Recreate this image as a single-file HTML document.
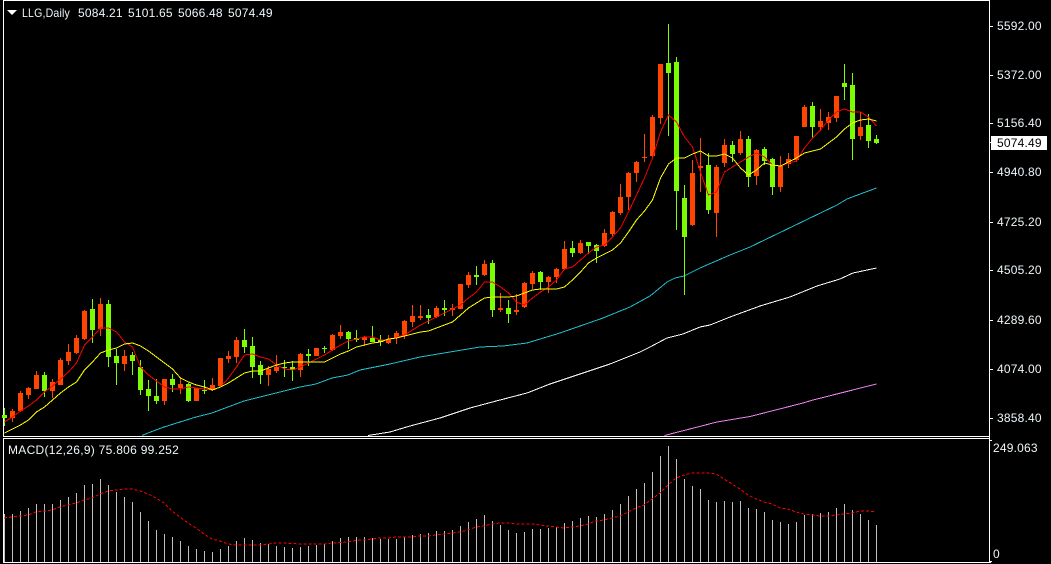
<!DOCTYPE html>
<html><head><meta charset="utf-8"><style>
html,body{margin:0;padding:0;background:#000;width:1051px;height:564px;overflow:hidden}
svg{display:block;position:absolute;left:0;top:0}
text{font-family:"Liberation Sans",sans-serif;font-size:12px;fill:#eef6fa;letter-spacing:.2px}
.l{fill:none;stroke-width:1;shape-rendering:crispEdges;stroke-linejoin:miter}
</style></head><body>
<svg width="1051" height="564" viewBox="0 0 1051 564" xmlns="http://www.w3.org/2000/svg">
<rect width="1051" height="564" fill="#000"/>
<!-- frame -->
<g fill="#fff" shape-rendering="crispEdges">
<rect x="3" y="0" width="987" height="1"/>
<rect x="3" y="0" width="1" height="437"/>
<rect x="3" y="436" width="987" height="1"/>
<rect x="3" y="438" width="987" height="1"/>
<rect x="3" y="438" width="1" height="125"/>
<rect x="3" y="562" width="988" height="1"/>
<rect x="989" y="0" width="1" height="563"/>
<rect x="990" y="26" width="3" height="1"/><rect x="990" y="75" width="3" height="1"/><rect x="990" y="123" width="3" height="1"/><rect x="990" y="172" width="3" height="1"/><rect x="990" y="222" width="3" height="1"/><rect x="990" y="270" width="3" height="1"/><rect x="990" y="320" width="3" height="1"/><rect x="990" y="369" width="3" height="1"/><rect x="990" y="418" width="3" height="1"/><rect x="990" y="142" width="3" height="1"/><rect x="990" y="440" width="2" height="1"/><rect x="990" y="561" width="2" height="1"/>
</g>
<!-- long MAs under candles -->
<path class="l" stroke="#ee82ee" d="M664.5 435.5L717 422L750 416.5L803 403L813 400L876.5 384"/>
<path class="l" stroke="#fff" d="M368 435.5L390 432L410 426L440 418L470 408L500 400L527 393L550 384L580 374L610 364L640 352L650 347L667 338L683 334L700 327L710 325L730 317L760 306L790 297L817 286L840 279L853 273L876.5 268"/>
<path class="l" stroke="#20bfd0" d="M142 435.5L148 433L164 427L180 422L196 417L212 413L228 407L244 401L260 397L276 393L300 387L316 384L332 378L348 375L360 370L390 364L420 357L450 352L480 347L503 346L527 343L560 333L603 318L630 307L650 296L667 282L675 278L684 276L700 268L730 255L750 247L837 205L847 199L863 193L876.5 188"/>
<!-- green candles -->
<path fill="#7cfc00" shape-rendering="crispEdges" d="M4 408h1V426h-1zM2 415h5V418h-5zM44 372h1V397h-1zM42 375h5V391h-5zM92 299h1V343h-1zM90 309h5V330h-5zM108 300h1V367h-1zM106 304h5V357h-5zM116 349h1V385h-1zM114 356h5V363h-5zM132 352h1V375h-1zM130 355h5V361h-5zM140 360h1V395h-1zM138 367h5V390h-5zM148 380h1V411h-1zM146 389h5V396h-5zM156 379h1V404h-1zM154 396h5V401h-5zM172 374h1V392h-1zM170 379h5V385h-5zM188 383h1V402h-1zM186 384h5V401h-5zM204 380h1V394h-1zM202 390h5V391h-5zM244 329h1V353h-1zM242 340h5V347h-5zM252 337h1V378h-1zM250 346h5V367h-5zM260 361h1V384h-1zM258 365h5V375h-5zM284 360h1V377h-1zM282 367h5V368h-5zM292 361h1V381h-1zM290 367h5V370h-5zM308 349h1V366h-1zM306 354h5V356h-5zM324 346h1V353h-1zM322 348h5V349h-5zM348 331h1V349h-1zM346 332h5V339h-5zM356 330h1V342h-1zM354 338h5V340h-5zM372 326h1V342h-1zM370 338h5V342h-5zM380 335h1V346h-1zM378 340h5V342h-5zM428 309h1V324h-1zM426 315h5V318h-5zM444 300h1V316h-1zM442 308h5V310h-5zM476 266h1V285h-1zM474 275h5V277h-5zM492 260h1V317h-1zM490 263h5V310h-5zM508 300h1V323h-1zM506 308h5V314h-5zM540 271h1V290h-1zM538 272h5V282h-5zM572 241h1V257h-1zM570 248h5V253h-5zM588 242h1V254h-1zM586 242h5V246h-5zM596 244h1V263h-1zM594 245h5V251h-5zM668 24h1V136h-1zM666 63h5V73h-5zM676 57h1V230h-1zM674 62h5V191h-5zM684 185h1V295h-1zM682 198h5V237h-5zM708 153h1V214h-1zM706 165h5V210h-5zM732 141h1V162h-1zM730 145h5V154h-5zM748 136h1V187h-1zM746 139h5V177h-5zM764 147h1V165h-1zM762 149h5V161h-5zM772 158h1V195h-1zM770 159h5V187h-5zM812 102h1V138h-1zM810 106h5V127h-5zM844 64h1V100h-1zM842 83h5V87h-5zM852 73h1V160h-1zM850 85h5V139h-5zM868 114h1V148h-1zM866 125h5V141h-5zM876 135h1V144h-1zM874 139h5V143h-5z"/>
<!-- red candles -->
<path fill="#ff4500" shape-rendering="crispEdges" d="M12 409h1V422h-1zM10 411h5V418h-5zM20 391h1V412h-1zM18 393h5V411h-5zM28 387h1V399h-1zM26 388h5V395h-5zM36 371h1V389h-1zM34 375h5V389h-5zM52 379h1V398h-1zM50 382h5V391h-5zM60 358h1V385h-1zM58 360h5V385h-5zM68 344h1V365h-1zM66 352h5V361h-5zM76 335h1V354h-1zM74 338h5V353h-5zM84 310h1V340h-1zM82 311h5V339h-5zM100 298h1V336h-1zM98 304h5V329h-5zM124 350h1V371h-1zM122 356h5V364h-5zM164 379h1V405h-1zM162 379h5V401h-5zM180 377h1V394h-1zM178 384h5V388h-5zM194 388h5V401h-5zM212 378h1V391h-1zM210 385h5V390h-5zM218 358h5V386h-5zM228 351h1V363h-1zM226 356h5V359h-5zM236 337h1V363h-1zM234 340h5V357h-5zM268 366h1V386h-1zM266 369h5V375h-5zM276 355h1V373h-1zM274 367h5V371h-5zM300 353h1V377h-1zM298 354h5V370h-5zM314 348h5V356h-5zM332 334h1V351h-1zM330 335h5V350h-5zM340 325h1V339h-1zM338 332h5V336h-5zM364 336h1V346h-1zM362 337h5V340h-5zM388 335h1V344h-1zM386 339h5V343h-5zM396 331h1V344h-1zM394 333h5V338h-5zM404 320h1V339h-1zM402 321h5V336h-5zM412 305h1V327h-1zM410 316h5V322h-5zM420 305h1V320h-1zM418 316h5V318h-5zM436 306h1V318h-1zM434 308h5V317h-5zM452 304h1V316h-1zM450 308h5V310h-5zM458 284h5V309h-5zM468 272h1V288h-1zM466 275h5V285h-5zM484 260h1V276h-1zM482 264h5V275h-5zM500 293h1V312h-1zM498 308h5V310h-5zM516 294h1V315h-1zM514 310h5V312h-5zM524 282h1V308h-1zM522 283h5V307h-5zM532 271h1V289h-1zM530 273h5V284h-5zM548 276h1V293h-1zM546 277h5V282h-5zM556 268h1V283h-1zM554 269h5V277h-5zM564 241h1V270h-1zM562 249h5V269h-5zM580 240h1V254h-1zM578 243h5V253h-5zM604 229h1V247h-1zM602 233h5V246h-5zM612 211h1V236h-1zM610 212h5V234h-5zM620 184h1V215h-1zM618 197h5V213h-5zM628 172h1V210h-1zM626 173h5V197h-5zM636 161h1V182h-1zM634 162h5V173h-5zM644 134h1V162h-1zM642 157h5V158h-5zM652 115h1V157h-1zM650 117h5V156h-5zM660 64h1V124h-1zM658 64h5V118h-5zM692 160h1V226h-1zM690 173h5V225h-5zM700 138h1V192h-1zM698 166h5V168h-5zM716 165h1V237h-1zM714 167h5V213h-5zM724 139h1V167h-1zM722 145h5V163h-5zM740 131h1V155h-1zM738 139h5V153h-5zM756 149h1V185h-1zM754 150h5V176h-5zM780 156h1V192h-1zM778 166h5V187h-5zM788 153h1V168h-1zM786 159h5V164h-5zM796 136h1V162h-1zM794 136h5V160h-5zM804 105h1V127h-1zM802 107h5V127h-5zM820 109h1V131h-1zM818 121h5V127h-5zM828 112h1V130h-1zM826 117h5V123h-5zM836 96h1V122h-1zM834 96h5V118h-5zM860 112h1V140h-1zM858 127h5V136h-5z"/>
<!-- red MA -->
<path class="l" stroke="#f00" d="M4.5 422L12.5 417L20.5 411L28.5 406L36.5 400L44.5 392L52.5 386L60.5 379L68.5 372L76.5 363L84.5 345L92.5 337L100.5 328L108.5 328L116.5 332L124.5 342L132.5 347L140.5 367L148.5 375L156.5 381L164.5 387L172.5 389L180.5 389L188.5 387L196.5 388L204.5 389L212.5 390L220.5 387L228.5 378L236.5 367L244.5 355L252.5 354L260.5 357L268.5 359L276.5 365L284.5 369L292.5 370L300.5 367L308.5 363L316.5 359L324.5 355L332.5 350L340.5 345L348.5 341L356.5 339L364.5 337L372.5 337L380.5 340L388.5 340L396.5 337L404.5 335L412.5 330L420.5 325L428.5 321L436.5 317L444.5 313L452.5 309L460.5 305L468.5 298L476.5 292L484.5 282L492.5 282L500.5 287L508.5 293L516.5 302L524.5 305L532.5 298L540.5 292L548.5 287L556.5 280L564.5 269L572.5 267L580.5 260L588.5 253L596.5 247L604.5 245L612.5 237L620.5 228L628.5 212L636.5 195L644.5 178L652.5 158L660.5 132L668.5 115L676.5 122L684.5 137L692.5 147L700.5 172L708.5 195L716.5 192L724.5 172L732.5 167L740.5 162L748.5 157L756.5 153L764.5 157L772.5 165L780.5 166L788.5 163L796.5 161L804.5 148L812.5 138L820.5 130L828.5 120L836.5 112L844.5 109L852.5 112L860.5 112L868.5 117L876.5 126"/>
<!-- yellow MA -->
<path class="l" stroke="#ff0" d="M4.5 433L12.5 429L20.5 425L28.5 420L36.5 412L44.5 407L52.5 400L60.5 393L68.5 387L76.5 382L84.5 370L92.5 362L100.5 353L108.5 350L116.5 348L124.5 344L132.5 343L140.5 346L148.5 351L156.5 357L164.5 363L172.5 369L180.5 378L188.5 382L196.5 385L204.5 387L212.5 390L220.5 387L228.5 383L236.5 378L244.5 373L252.5 371L260.5 371L268.5 368L276.5 365L284.5 363L292.5 362L300.5 362L308.5 362L316.5 362L324.5 362L332.5 358L340.5 354L348.5 351L356.5 347L364.5 345L372.5 343L380.5 342L388.5 339L396.5 338L404.5 336L412.5 334L420.5 332L428.5 331L436.5 328L444.5 325L452.5 322L460.5 315L468.5 308L476.5 303L484.5 298L492.5 297L500.5 297L508.5 297L516.5 296L524.5 293L532.5 290L540.5 289L548.5 289L556.5 289L564.5 287L572.5 280L580.5 272L588.5 263L596.5 258L604.5 254L612.5 250L620.5 243L628.5 232L636.5 220L644.5 211L652.5 200L660.5 178L668.5 164L676.5 158L684.5 158L692.5 154L700.5 151L708.5 156L716.5 156L724.5 154L732.5 158L740.5 168L748.5 175L756.5 170L764.5 163L772.5 165L780.5 166L788.5 162L796.5 158L804.5 153L812.5 151L820.5 149L828.5 143L836.5 137L844.5 129L852.5 123L860.5 120L868.5 119L876.5 121"/>
<!-- MACD bars -->
<path class="l" stroke="#c0c0c0" d="M4.5 514V562M12.5 514V562M20.5 511V562M28.5 508V562M36.5 504V562M44.5 504V562M52.5 504V562M60.5 500V562M68.5 497V562M76.5 493V562M84.5 485V562M92.5 484V562M100.5 479V562M108.5 485V562M116.5 492V562M124.5 497V562M132.5 502V562M140.5 512V562M148.5 521V562M156.5 530V562M164.5 534V562M172.5 537V562M180.5 541V562M188.5 546V562M196.5 549V562M204.5 551V562M212.5 552V562M220.5 549V562M228.5 546V562M236.5 541V562M244.5 538V562M252.5 540V562M260.5 543V562M268.5 544V562M276.5 546V562M284.5 547V562M292.5 548V562M300.5 547V562M308.5 546V562M316.5 545V562M324.5 544V562M332.5 541V562M340.5 538V562M348.5 537V562M356.5 537V562M364.5 537V562M372.5 538V562M380.5 539V562M388.5 539V562M396.5 539V562M404.5 537V562M412.5 535V562M420.5 534V562M428.5 533V562M436.5 531V562M444.5 531V562M452.5 530V562M460.5 526V562M468.5 522V562M476.5 519V562M484.5 515V562M492.5 521V562M500.5 525V562M508.5 530V562M516.5 533V562M524.5 532V562M532.5 529V562M540.5 529V562M548.5 528V562M556.5 527V562M564.5 523V562M572.5 521V562M580.5 518V562M588.5 516V562M596.5 517V562M604.5 514V562M612.5 510V562M620.5 504V562M628.5 496V562M636.5 489V562M644.5 483V562M652.5 472V562M660.5 456V562M668.5 446V562M676.5 459V562M684.5 479V562M692.5 486V562M700.5 489V562M708.5 500V562M716.5 502V562M724.5 501V562M732.5 502V562M740.5 501V562M748.5 508V562M756.5 509V562M764.5 512V562M772.5 520V562M780.5 522V562M788.5 524V562M796.5 522V562M804.5 515V562M812.5 514V562M820.5 513V562M828.5 512V562M836.5 508V562M844.5 504V562M852.5 510V562M860.5 514V562M868.5 520V562M876.5 525V562"/>
<!-- signal -->
<path class="l" stroke="#f00" stroke-dasharray="3 2" d="M4 518L20 516L28 515L36 512L44 511L52 510L60 507L68 505L76 503L84 500L92 498L100 494L108 491L116 490L124 489L132 489L140 491L148 494L156 498L164 503L172 511L180 517L188 523L196 528L204 534L212 539L220 541L228 544L236 545L244 545L252 545L260 545L268 544L276 543L284 543L300 544L316 544L324 544L332 543L348 542L352 541L360 540L364 540L372 539L380 538L388 538L396 537L412 537L420 536L428 536L436 535L444 534L452 533L460 532L468 530L476 527L484 526L492 524L500 523L508 523L516 524L524 524L532 524L540 525L548 526L556 527L564 528L572 527L580 526L588 524L596 521L604 520L612 518L620 516L628 512L636 508L644 505L652 499L660 493L668 485L676 478L684 475L692 473L698 473L708 473L716 474L724 479L732 484L740 489L748 495L756 499L764 502L772 504L780 508L788 509L796 512L804 514L812 515L820 516L828 516L836 515L844 514L852 513L860 511L868 511L876 512"/>
<!-- header -->
<path fill="#fff" d="M7 10H17L12 15z"/>
<text x="22" y="17" textLength="48" lengthAdjust="spacingAndGlyphs">LLG,Daily</text>
<text x="78" y="17">5084.21</text>
<text x="128" y="17">5101.65</text>
<text x="178" y="17">5066.48</text>
<text x="228" y="17">5074.49</text>
<text x="8" y="454" textLength="171" lengthAdjust="spacing">MACD(12,26,9) 75.806 99.252</text>
<!-- axis -->
<text x="997" y="30">5592.00</text>
<text x="997" y="79">5372.00</text>
<text x="997" y="127">5156.40</text>
<rect x="991" y="136" width="56" height="14" fill="#fff"/>
<text x="997" y="147" style="fill:#000">5074.49</text>
<text x="997" y="176">4940.80</text>
<text x="997" y="226">4725.20</text>
<text x="997" y="274">4505.20</text>
<text x="997" y="324">4289.60</text>
<text x="997" y="373">4074.00</text>
<text x="997" y="422">3858.40</text>
<text x="993" y="452">249.063</text>
<text x="993" y="558">0</text>
</svg>
</body></html>
